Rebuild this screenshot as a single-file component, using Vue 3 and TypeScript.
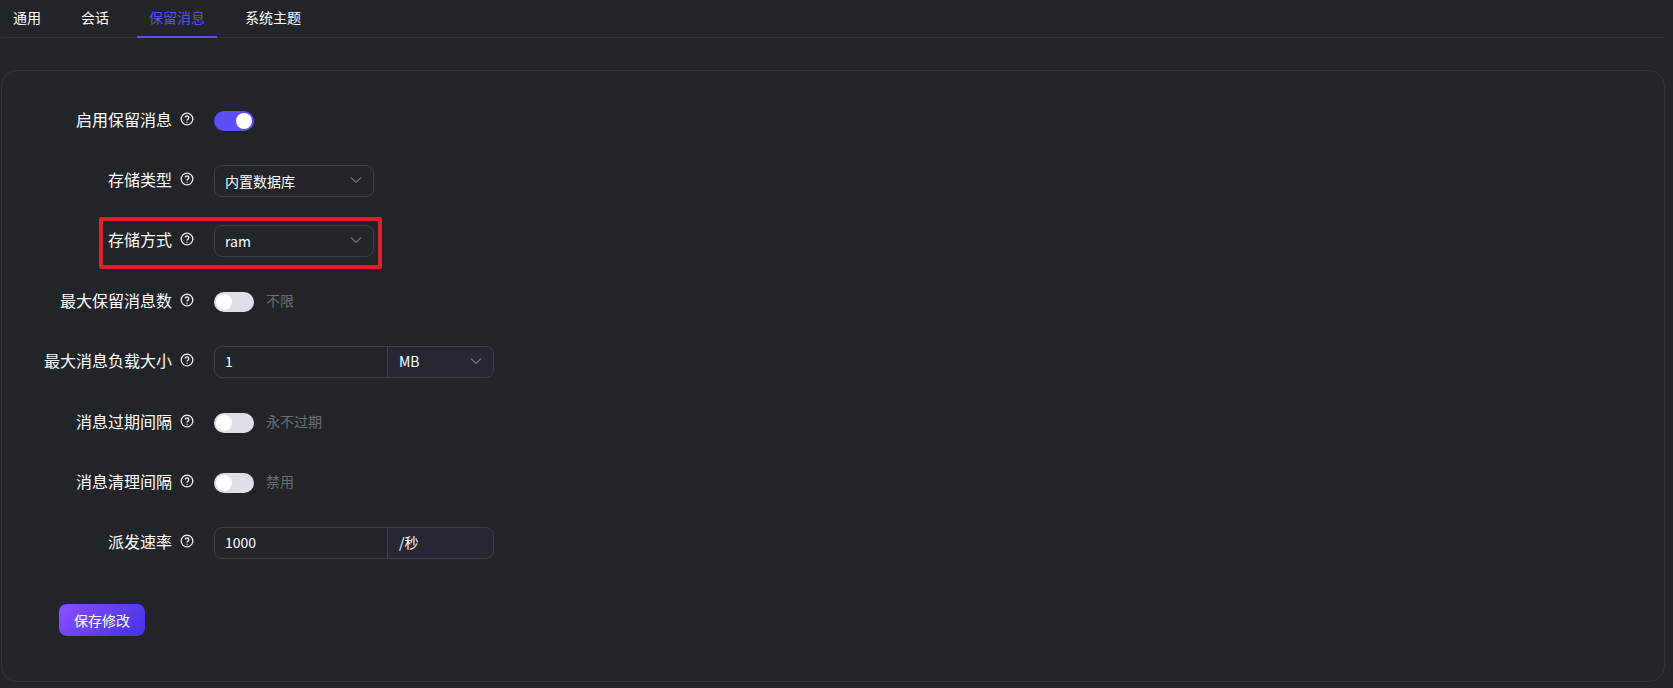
<script setup lang="ts">
type Row =
  | { label: string; kind: 'switch'; on: boolean; hint?: string }
  | { label: string; kind: 'select'; value: string; marked?: boolean }
  | { label: string; kind: 'unit'; value: string; unit: string; arrow: boolean }

const tabs = ['通用', '会话', '保留消息', '系统主题']
const activeTab = '保留消息'

const rows: Row[] = [
  { label: '启用保留消息', kind: 'switch', on: true },
  { label: '存储类型', kind: 'select', value: '内置数据库' },
  { label: '存储方式', kind: 'select', value: 'ram', marked: true },
  { label: '最大保留消息数', kind: 'switch', on: false, hint: '不限' },
  { label: '最大消息负载大小', kind: 'unit', value: '1', unit: 'MB', arrow: true },
  { label: '消息过期间隔', kind: 'switch', on: false, hint: '永不过期' },
  { label: '消息清理间隔', kind: 'switch', on: false, hint: '禁用' },
  { label: '派发速率', kind: 'unit', value: '1000', unit: '/秒', arrow: false },
]
</script>

<template>
  <div class="page">
    <div class="tabs">
      <div
        v-for="tab in tabs"
        :key="tab"
        class="tab"
        :class="{ active: tab === activeTab }"
      >
        {{ tab }}
      </div>
    </div>

    <div class="card">
      <div v-for="row in rows" :key="row.label" class="row">
        <!-- 红框标注 -->
        <div v-if="row.kind === 'select' && row.marked" class="mark"></div>

        <div class="label">
          <span>{{ row.label }}</span>
          <svg class="help" viewBox="0 0 14 14" fill="none" stroke="currentColor">
            <circle cx="7" cy="7" r="5.8" stroke-width="1.3" />
            <path d="M5.3 5.6a1.75 1.75 0 1 1 2.7 1.5c-.65.4-1 .7-1 1.4" stroke-width="1.3" />
            <path d="M7 9.7v1.1" stroke-width="1.3" />
          </svg>
        </div>

        <template v-if="row.kind === 'switch'">
          <div class="switch" :class="{ on: row.on }"><i></i></div>
          <span v-if="row.hint" class="hint">{{ row.hint }}</span>
        </template>

        <div v-else-if="row.kind === 'select'" class="select">
          <span>{{ row.value }}</span>
          <svg class="arrow" viewBox="0 0 12 12" fill="none" stroke="currentColor">
            <path d="M1 3.5l5 5 5-5" />
          </svg>
        </div>

        <div v-else class="group">
          <div class="group-input">{{ row.value }}</div>
          <div class="group-unit">
            <span>{{ row.unit }}</span>
            <svg v-if="row.arrow" class="arrow" viewBox="0 0 12 12" fill="none" stroke="currentColor">
              <path d="M1 3.5l5 5 5-5" />
            </svg>
          </div>
        </div>
      </div>

      <button class="save">保存修改</button>
    </div>
  </div>
</template>

<style>
html,
body {
  margin: 0;
  background: #212429;
}
</style>

<style scoped>
.page {
  box-sizing: border-box;
  width: 1673px;
  height: 688px;
  overflow: hidden;
  padding: 0 8px 0 1px;
  background: #212429;
  color: #fff;
  font-family: "Noto Sans CJK SC", "Liberation Sans", sans-serif;
}

.tabs {
  display: flex;
  gap: 16px;
  height: 37px;
  border-bottom: 1px solid #2f3238;
}

.tab {
  box-sizing: border-box;
  height: 38px;
  padding: 0 12px;
  font-size: 14px;
  line-height: 34px;
}

.tab.active {
  color: #5b4ff5;
  border-bottom: 2px solid #5b4ff5;
}

.card {
  box-sizing: border-box;
  height: 612px;
  margin-top: 32px;
  padding: 33.6px 0 0 57px;
  border: 1px solid #2f3238;
  border-radius: 16px;
}

.row {
  position: relative;
  display: flex;
  align-items: center;
  height: 32px;
  margin-bottom: 28.4px;
}

.mark {
  position: absolute;
  left: 40px;
  top: -8px;
  width: 283px;
  height: 52px;
  box-sizing: border-box;
  border: 4px solid #e3202a;
  border-radius: 2px;
}

.label {
  display: flex;
  align-items: center;
  justify-content: flex-end;
  flex: none;
  box-sizing: border-box;
  width: 212px;
  margin-left: -57px;
  padding-right: 20px;
  font-size: 16px;
  white-space: nowrap;
}

.label span {
  margin-top: -4px;
}

.help {
  flex: none;
  width: 14px;
  height: 14px;
  margin: -4px 0 0 8px;
  color: #f2f2f2;
}

.switch {
  position: relative;
  width: 40px;
  height: 20px;
  border-radius: 10px;
  background: #dcdfe6;
}

.switch i {
  position: absolute;
  top: 2px;
  left: 2px;
  width: 16px;
  height: 16px;
  border-radius: 50%;
  background: #fff;
}

.switch.on {
  background: #5b4ff5;
}

.switch.on i {
  left: 22px;
}

.hint {
  margin: -4px 0 0 12px;
  font-size: 14px;
  color: #6d6f73;
}

.select,
.group {
  box-sizing: border-box;
  display: flex;
  height: 32px;
  border: 1px solid #3c3f45;
  border-radius: 8px;
  font-size: 14px;
  color: #fff;
}

.select {
  align-items: center;
  justify-content: space-between;
  width: 160px;
  padding: 0 11px 0 10px;
}

.arrow {
  width: 12px;
  height: 12px;
  margin-top: -2px;
  color: #a8abb2;
}

.group {
  width: 280px;
  overflow: hidden;
}

.group-input {
  flex: none;
  width: 173px;
  padding-left: 10px;
  box-sizing: border-box;
  line-height: 29px;
  border-right: 1px solid #3c3f45;
}

.group-unit {
  display: flex;
  align-items: center;
  justify-content: space-between;
  flex: 1;
  padding: 0 11px;
  background: #252832;
}

.group-unit span {
  margin-top: -2px;
}

.save {
  display: block;
  width: 86px;
  height: 32px;
  margin-top: 44.6px;
  padding: 0;
  border: 0;
  border-radius: 8px;
  background: linear-gradient(135deg, #8a50ff, #4231e6);
  color: #fff;
  font-family: inherit;
  font-size: 14px;
}
</style>
